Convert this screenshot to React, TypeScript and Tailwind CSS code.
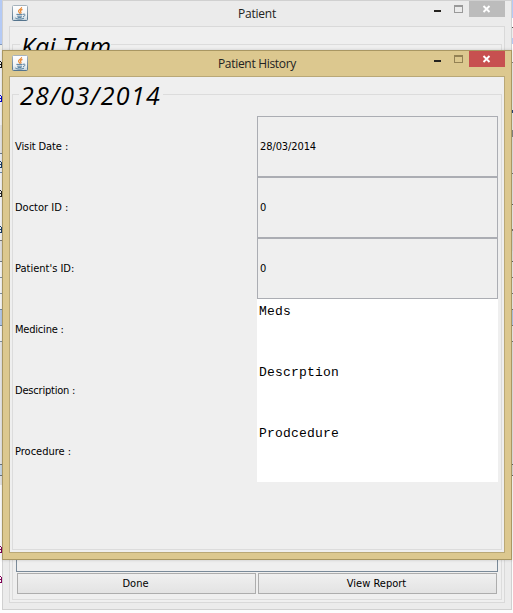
import React from "react";

function JavaIcon() {
  return (
    <svg className="block h-4 w-4 shrink-0" viewBox="0 0 16 16">
      <defs>
        <linearGradient id="tile" x1="0" y1="0" x2="0" y2="1">
          <stop offset="0" stopColor="#ffffff" />
          <stop offset="0.65" stopColor="#f0f3f5" />
          <stop offset="1" stopColor="#c3d3de" />
        </linearGradient>
        <linearGradient id="edge" x1="0" y1="0" x2="0" y2="1">
          <stop offset="0" stopColor="#a6b3bd" />
          <stop offset="1" stopColor="#54748d" />
        </linearGradient>
      </defs>
      <rect x="0.5" y="0.5" width="15" height="15" rx="1" fill="url(#tile)" stroke="url(#edge)" />
      <path d="M9.6 2.2C10 4 6.3 4.6 6.6 6.3C6.8 7.2 7.6 7.7 7.8 8.6M10.5 4.4C8.8 5 8 5.8 8.7 6.6C9.3 7.3 9.1 8 8.5 8.6" fill="none" stroke="#e8842c" strokeWidth="1.15" />
      <path d="M4.4 9.4H10.6M5.2 11.2H10M11 9.3C13.8 8.4 13.7 11 11.1 11.6M5.7 12.6H9.5M3.3 13C4.6 14.4 9.7 14.5 12 13.2" fill="none" stroke="#557f9e" strokeWidth="1" />
    </svg>
  );
}

function TitleBar({ title, active }: { title: string; active?: boolean }) {
  return (
    <div className="flex h-[25px] w-full">
      <div className="w-[85px] shrink-0 pl-[9px] pt-1">
        <JavaIcon />
      </div>
      <div
        className={`flex-1 pt-[5px] text-center font-['Open_Sans','Noto_Sans',sans-serif] text-[12px] leading-4 text-[#222] ${
          active ? "tracking-[-0.3px]" : "tracking-[-0.2px]"
        }`}
      >
        {title}
      </div>
      <svg className="block h-[17px] w-[85px] shrink-0" viewBox="0 0 85 17" shapeRendering="crispEdges">
        <rect x="8" y="9" width="7" height="2" fill="#25231f" />
        <path d="M28.5 4.5H36.5V11.5H28.5ZM28 5.5H37" fill="none" stroke={active ? "#938154" : "#999999"} />
        <rect x="43" y="0" width="36" height="16" fill={active ? "#c75050" : "#bcbcbc"} />
        <path d="M57.5 5L63.5 11M63.5 5L57.5 11" stroke="#fff" strokeWidth="1.9" shapeRendering="auto" />
      </svg>
    </div>
  );
}

const heading =
  "bg-[#efefef] font-['Open_Sans','Noto_Sans',sans-serif] font-medium italic text-black whitespace-nowrap";

const fields = [
  { label: "Visit Date :", value: "28/03/2014", space: "tracking-[-0.1px]" },
  { label: "Doctor ID :", value: "0", space: "tracking-normal" },
  { label: "Patient's ID:", value: "0", space: "tracking-normal" },
];
const areas = [
  { label: "Medicine :", value: "Meds", space: "tracking-[-0.2px]" },
  { label: "Description :", value: "Descrption", space: "tracking-[-0.2px]" },
  { label: "Procedure :", value: "Prodcedure", space: "tracking-normal" },
];

const leftStrip = [
  ["h-[44px]", "bg-[#b4caf5]"],
  ["h-px", "bg-[#8198b8]"],
  ["h-[5px]", "bg-[#eeeee8]"],
  ["h-[75px]", "bg-[#f5f5f5]"],
  ["h-[28px]", "bg-[#e6e6e5]"],
  ["h-px", "bg-[#6b7d90]"],
  ["h-[18px]", "bg-[#edf1f7]"],
  ["h-px", "bg-[#6b8bae]"],
  ["h-[67px]", "bg-[#f6f6f6]"],
  ["h-px", "bg-[#777777]"],
  ["h-[20px]", "bg-[#e2e2e2]"],
  ["h-px", "bg-[#717c88]"],
  ["h-[15px]", "bg-[#f8f8f8]"],
  ["h-px", "bg-[#7f91a3]"],
  ["h-[15px]", "bg-[#f8f8f8]"],
  ["h-px", "bg-[#7f91a3]"],
  ["h-[15px]", "bg-[#f8f8f8]"],
  ["h-px", "bg-[#6f88a4]"],
  ["h-[15px]", "bg-[#b4caea]"],
  ["h-px", "bg-[#6f88a4]"],
  ["h-[15px]", "bg-[#f8f8f8]"],
  ["h-px", "bg-[#7f91a3]"],
  ["h-[122px]", "bg-[#e8e8e8]"],
  ["h-px", "bg-[#68747f]"],
  ["h-[10px]", "bg-[#c9d9e9]"],
  ["h-px", "bg-[#68747f]"],
  ["h-[9px]", "bg-[#e6e6e6]"],
];

const rightStrip = [
  ["h-[18px]", "bg-[#b4caf5]"],
  ["h-[9px]", "bg-white"],
  ["h-px", "bg-[#555]"],
  ["h-[10px]", "bg-[#eee]"],
  ["h-[6px]", "bg-[#b4caf5]"],
  ["h-[18px]", "bg-white"],
  ["h-px", "bg-[#888]"],
  ["h-[47px]", "bg-[#efefef]"],
  ["h-[3px]", "bg-[#29467e]"],
  ["h-[17px]", "bg-[#eee]"],
  ["h-[7px]", "bg-[#888]"],
  ["h-[36px]", "bg-[#e5e5e5]"],
  ["h-px", "bg-[#777]"],
  ["h-[30px]", "bg-[#e8e8e8]"],
  ["h-px", "bg-[#666]"],
  ["h-[24px]", "bg-[#eee]"],
  ["h-[2px]", "bg-[#777]"],
  ["h-[20px]", "bg-[#ddd]"],
  ["h-[10px]", "bg-[#e5e5e5]"],
  ["h-px", "bg-[#666]"],
  ["h-[15px]", "bg-[#eee]"],
  ["h-px", "bg-[#777]"],
  ["h-[15px]", "bg-[#eee]"],
  ["h-px", "bg-[#777]"],
  ["h-[15px]", "bg-[#eee]"],
  ["h-px", "bg-[#777]"],
  ["h-[15px]", "bg-[#b4caea]"],
  ["h-px", "bg-[#777]"],
  ["h-[15px]", "bg-[#eee]"],
  ["h-px", "bg-[#777]"],
  ["h-[122px]", "bg-[#e5e5e5]"],
  ["h-px", "bg-[#666]"],
  ["h-[10px]", "bg-[#ddd]"],
  ["h-px", "bg-[#666]"],
];

// Slivers of the page behind, visible in the 2px left of the window frame.
const marks = [
  { y: 61, color: "#111111" },
  { y: 95, color: "#0000d0" },
  { y: 161, color: "#173d68" },
  { y: 190, color: "#222222" },
  { y: 226, color: "#173d68" },
  { y: 546, color: "#7f0055" },
  { y: 576, color: "#7f0055" },
];

export default function App() {
  return (
    <div className="relative flex h-[613px] w-[513px] justify-between overflow-hidden bg-[#fdfdfd] font-['DejaVu_Sans_Condensed','DejaVu_Sans',sans-serif] text-[11px] text-black">
      <div className="w-[2px]">
        {leftStrip.map(([h, c], i) => (
          <div key={i} className={`${h} ${c}`} />
        ))}
      </div>
      <div className="w-px">
        {rightStrip.map(([h, c], i) => (
          <div key={i} className={`${h} ${c}`} />
        ))}
      </div>
      <svg className="absolute left-0 top-0 h-[613px] w-[2px]" viewBox="0 0 2 613" shapeRendering="crispEdges">
        {marks.map((m) => (
          <path key={m.y} d={`M0 ${m.y + 0.5}H1M1.5 ${m.y + 1}V${m.y + 6}M0 ${m.y + 3.5}H1M0 ${m.y + 6.5}H2`} stroke={m.color} fill="none" />
        ))}
      </svg>

      {/* Patient window */}
      <div className="absolute left-[2px] top-0 flex h-[610px] w-[510px] flex-col border border-[#d0d0d0] bg-[#ebebeb]">
        <TitleBar title="Patient" />
        <div className="mx-[6px] flex h-[577px] flex-col border border-[#d9d9d9] bg-[#efefef] px-[2px]">
          <div className="mt-[17px] flex h-[556px] flex-col border border-[#dcdcdc]">
            <div className="h-[18px]">
              <span className={`${heading} relative -top-[17px] left-[7px] block h-9 w-[91px] pl-px text-[25px] leading-9 tracking-[0.1px]`}>
                Kai Tam
              </span>
            </div>
            <div className="mx-[3px] mt-[468px] h-[41px] border border-[#7a8a99]" />
            <div className="ml-1 mr-1 mt-px flex justify-between">
              {["Done", "View Report"].map((b) => (
                <button
                  key={b}
                  className="flex h-[21px] w-[239px] items-center justify-center border border-[#adadad] bg-linear-to-b from-[#f0f0f0] to-[#e3e3e3] pr-[2px] leading-[19px]"
                >
                  {b}
                </button>
              ))}
            </div>
          </div>
        </div>
      </div>

      {/* Patient History window */}
      <div className="absolute left-[2px] top-[50px] flex h-[510px] w-[510px] flex-col border border-[#a99762] bg-[#dcc88f] shadow-[0_0_3px_rgba(0,0,0,0.18)]">
        <TitleBar title="Patient History" active />
        <div className="mx-[6px] flex h-[477px] flex-col border border-[#b9a877] bg-[#efefef] px-[2px]">
          <div className="mt-[17px] h-[456px] border border-[#dcdcdc]">
            <div className="h-[21px]">
              <span className={`${heading} relative -top-[18px] left-[6px] block h-9 w-[144px] pl-px text-[25px] leading-9 tracking-[1.35px]`}>
                28/03/2014
              </span>
            </div>
            <div className="pl-[2px] pr-[3px]">
              {fields.map((f) => (
                <div key={f.label} className="flex h-[61px]">
                  <label className={`w-[242px] leading-[61px] ${f.space}`}>{f.label}</label>
                  <div className={`w-[241px] border border-[#abadb3] pl-[2px] leading-[59px] ${f.space}`}>
                    {f.value}
                  </div>
                </div>
              ))}
              {areas.map((a) => (
                <div key={a.label} className="flex h-[61px]">
                  <label className={`w-[242px] leading-[61px] ${a.space}`}>{a.label}</label>
                  <div className="w-[241px] bg-white pl-[2px] pt-[5px] font-['Liberation_Mono',monospace] text-[13px] leading-[16px] tracking-[0.2px]">
                    {a.value}
                  </div>
                </div>
              ))}
            </div>
          </div>
        </div>
      </div>
    </div>
  );
}
